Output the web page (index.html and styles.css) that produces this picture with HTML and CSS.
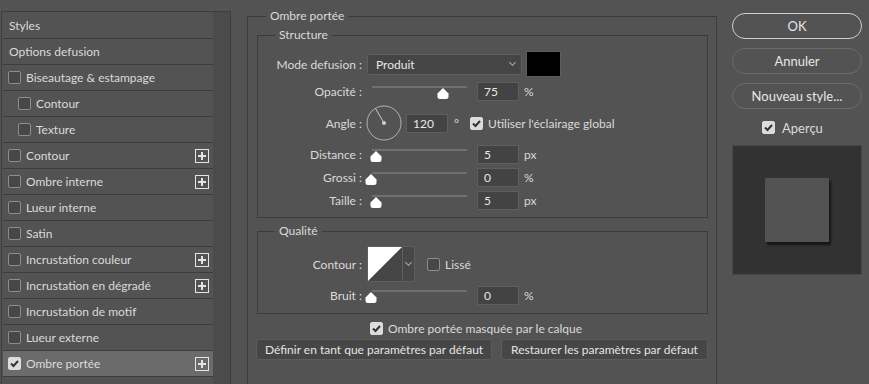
FILE: index.html
```html
<!DOCTYPE html>
<html lang="fr">
<head>
  <meta charset="UTF-8">
  <meta name="viewport" content="width=device-width, initial-scale=1.0">
  <title>Style de calque</title>
  <link rel="stylesheet" href="styles.css">
</head>
<body>
  <div class="dialog">
    <div class="sidebar">
      <ul class="fx-list">
        <li class="fx-row heading">Styles</li>
        <li class="fx-row heading">Options defusion</li>
        <li class="fx-row"><span class="check"></span>Biseautage &amp; estampage</li>
        <li class="fx-row sub"><span class="check"></span>Contour</li>
        <li class="fx-row sub"><span class="check"></span>Texture</li>
        <li class="fx-row"><span class="check"></span>Contour<span class="plus"></span></li>
        <li class="fx-row"><span class="check"></span>Ombre interne<span class="plus"></span></li>
        <li class="fx-row"><span class="check"></span>Lueur interne</li>
        <li class="fx-row"><span class="check"></span>Satin</li>
        <li class="fx-row"><span class="check"></span>Incrustation couleur<span class="plus"></span></li>
        <li class="fx-row"><span class="check"></span>Incrustation en dégradé<span class="plus"></span></li>
        <li class="fx-row"><span class="check"></span>Incrustation de motif</li>
        <li class="fx-row"><span class="check"></span>Lueur externe</li>
        <li class="fx-row active"><span class="check on"></span>Ombre portée<span class="plus"></span></li>
      </ul>
      <div class="scroll"></div>
    </div>

    <div class="main">
      <fieldset class="group outer">
        <legend>Ombre portée</legend>

        <fieldset class="group structure">
          <legend>Structure</legend>

          <div class="row row-mode">
            <label class="lbl">Mode defusion :</label>
            <div class="select">Produit<span class="chevron"></span></div>
            <div class="swatch"></div>
          </div>

          <div class="row">
            <label class="lbl">Opacité :</label>
            <div class="slider"><span class="track"></span><span class="thumb" style="left: 65px"></span></div>
            <div class="num">75</div>
            <span class="unit">%</span>
          </div>

          <div class="row row-angle">
            <label class="lbl">Angle :</label>
            <svg class="dial" width="36" height="36" viewBox="0 0 36 36">
              <circle cx="18" cy="18" r="17" fill="none" stroke="#b2b2b2" stroke-width="1"/>
              <line x1="18" y1="18" x2="9.5" y2="3.5" stroke="#cfcfcf" stroke-width="1"/>
              <circle cx="18" cy="18" r="2" fill="#cfcfcf"/>
            </svg>
            <div class="num angle-num">120</div>
            <span class="unit deg">°</span>
            <span class="check on"></span>
            <span class="opt">Utiliser l'éclairage global</span>
          </div>

          <div class="row">
            <label class="lbl">Distance :</label>
            <div class="slider"><span class="track"></span><span class="thumb" style="left: -2px"></span></div>
            <div class="num">5</div>
            <span class="unit">px</span>
          </div>

          <div class="row">
            <label class="lbl">Grossi :</label>
            <div class="slider"><span class="track"></span><span class="thumb" style="left: -7px"></span></div>
            <div class="num">0</div>
            <span class="unit">%</span>
          </div>

          <div class="row">
            <label class="lbl">Taille :</label>
            <div class="slider"><span class="track"></span><span class="thumb" style="left: -2px"></span></div>
            <div class="num">5</div>
            <span class="unit">px</span>
          </div>
        </fieldset>

        <fieldset class="group quality">
          <legend>Qualité</legend>

          <div class="row row-contour">
            <label class="lbl">Contour :</label>
            <div class="curve">
              <svg width="34" height="34" viewBox="0 0 34 34">
                <rect width="34" height="34" fill="#464646"/>
                <polygon points="0,0 34,0 0,34" fill="#ffffff"/>
              </svg>
              <span class="curve-arrow"><span class="chevron"></span></span>
            </div>
            <span class="check"></span>
            <span class="opt">Lissé</span>
          </div>

          <div class="row">
            <label class="lbl">Bruit :</label>
            <div class="slider"><span class="track"></span><span class="thumb" style="left: -7px"></span></div>
            <div class="num">0</div>
            <span class="unit">%</span>
          </div>
        </fieldset>

        <div class="mask-row">
          <span class="check on"></span>
          <span class="opt">Ombre portée masquée par le calque</span>
        </div>

        <div class="defaults">
          <button class="btn btn-set">Définir en tant que paramètres par défaut</button>
          <button class="btn btn-reset">Restaurer les paramètres par défaut</button>
        </div>
      </fieldset>
    </div>

    <div class="actions">
      <button class="pill primary">OK</button>
      <button class="pill">Annuler</button>
      <button class="pill">Nouveau style...</button>
      <div class="preview-toggle">
        <span class="check on"></span>
        <span class="opt">Aperçu</span>
      </div>
      <div class="preview">
        <div class="preview-square"></div>
      </div>
    </div>
  </div>
</body>
</html>
```

FILE: styles.css
```css
body {
  margin: 0;
  height: 384px;
  overflow: hidden;
  background-color: #535353;
  font-family: Lato, "Noto Sans", sans-serif;
  font-size: 12px;
  color: #dadada;
}

.dialog {
  display: flex;
  align-items: flex-start;
  height: 384px;
  overflow: hidden;
}

/* left list of effects */

.sidebar {
  display: flex;
  flex: none;
  width: 228px;
  height: 380px;
  margin: 11px 0 0 1px;
  border-top: 1px solid #3d3d3d;
  border-left: 1px solid #3d3d3d;
  border-right: 1px solid #3d3d3d;
}

.fx-list {
  list-style: none;
  margin: 1px 0 0 1px;
  padding: 0;
  width: 210px;
}

.fx-row {
  display: flex;
  align-items: center;
  height: 25px;
  border-bottom: 1px solid #3d3d3d;
  padding-left: 5px;
  white-space: nowrap;
}

.fx-row.heading {
  padding-left: 6px;
}

.fx-row.sub {
  padding-left: 15px;
}

.fx-row.active {
  background-color: #6b6b6b;
}

.fx-row .check {
  margin-right: 5px;
}

.scroll {
  flex: 1;
  background-color: #4b4b4b;
}

.check {
  display: inline-block;
  flex: none;
  width: 11px;
  height: 11px;
  border: 1px solid #8d8d8d;
  border-radius: 2px;
  background-color: #474747;
}

.check.on {
  border-color: #dcdcdc;
  background-color: #dcdcdc;
  background-image: url("data:image/svg+xml,%3Csvg xmlns='http://www.w3.org/2000/svg' width='11' height='11' viewBox='0 0 11 11'%3E%3Cpath d='M2 5.5 L4.5 8 L9 3' fill='none' stroke='%23333' stroke-width='2'/%3E%3C/svg%3E");
}

.plus {
  margin-left: auto;
  margin-right: 4px;
  width: 12px;
  height: 12px;
  border: 1px solid #e4e4e4;
  background-image: url("data:image/svg+xml,%3Csvg xmlns='http://www.w3.org/2000/svg' width='12' height='12' viewBox='0 0 12 12'%3E%3Cpath d='M6 2 V10 M2 6 H10' stroke='%23e4e4e4' stroke-width='2'/%3E%3C/svg%3E");
}

/* main settings */

.main {
  flex: none;
  margin-left: 16px;
}

.group {
  margin: 0;
  padding: 0;
  border: 1px solid #3c3c3c;
  min-width: 0;
}

.group legend {
  margin-left: 17px;
  padding: 0 4px;
  line-height: 14px;
}

.outer {
  box-sizing: border-box;
  width: 470px;
  height: 400px;
  margin-top: 9px;
  padding: 0 8px 0 9px;
}

.outer > legend {
  margin-left: 9px;
}

.structure {
  margin-top: 5px;
  padding: 9px 0 7px;
  display: flex;
  flex-direction: column;
  gap: 4px;
}

.quality {
  margin-top: 6px;
  padding: 8px 0 8px;
  display: flex;
  flex-direction: column;
  gap: 4px;
}

.row {
  display: flex;
  align-items: center;
  height: 19px;
}

.row-mode {
  height: 26px;
  margin-bottom: 1px;
}

.row-angle {
  height: 36px;
}

.row-contour {
  height: 36px;
}

.lbl {
  width: 104px;
  flex: none;
  text-align: right;
  white-space: nowrap;
}

.select {
  display: flex;
  align-items: center;
  width: 145px;
  height: 19px;
  margin-left: 5px;
  padding-left: 8px;
  border: 1px solid #5e5e5e;
  border-radius: 3px;
  background-color: #454545;
  color: #e8e8e8;
}

.chevron {
  display: inline-block;
  width: 4px;
  height: 4px;
  border-right: 1px solid #a8a8a8;
  border-bottom: 1px solid #a8a8a8;
  transform: rotate(45deg);
}

.select .chevron {
  margin-left: auto;
  margin-right: 6px;
  margin-top: -3px;
}

.swatch {
  width: 33px;
  height: 24px;
  margin-left: 4px;
  border: 1px solid #5e5e5e;
  background-color: #000;
}

.slider {
  position: relative;
  width: 95px;
  height: 19px;
  margin-left: 10px;
}

.track {
  position: absolute;
  left: 0;
  right: 0;
  top: 4px;
  height: 2px;
  background-color: #707070;
}

.thumb {
  position: absolute;
  top: 6px;
  width: 12px;
  height: 11px;
  background-image: url("data:image/svg+xml,%3Csvg xmlns='http://www.w3.org/2000/svg' width='12' height='11' viewBox='0 0 12 11'%3E%3Cpath d='M6 0 L11.5 5.5 V8.5 Q11.5 11 9 11 H3 Q0.5 11 0.5 8.5 V5.5 Z' fill='%23ffffff'/%3E%3C/svg%3E");
}

.num {
  width: 34px;
  height: 17px;
  margin-left: 10px;
  padding-left: 6px;
  line-height: 17px;
  border: 1px solid #5e5e5e;
  background-color: #434343;
  color: #e8e8e8;
}

.unit {
  margin-left: 5px;
}

.dial {
  flex: none;
  margin-left: 4px;
}

.angle-num {
  margin-left: 4px;
  width: 34px;
}

.unit.deg {
  margin-left: 6px;
  margin-right: 11px;
}

.opt {
  margin-left: 5px;
  white-space: nowrap;
}

.curve {
  display: flex;
  margin-left: 5px;
  border: 1px solid #5e5e5e;
}

.curve svg {
  display: block;
}

.curve-arrow {
  display: flex;
  align-items: center;
  justify-content: center;
  width: 11px;
  border-left: 1px solid #5e5e5e;
  background-color: #474747;
}

.curve-arrow .chevron {
  margin-top: -3px;
}

.row-contour .check {
  margin-left: 12px;
}

.mask-row {
  display: flex;
  align-items: center;
  height: 14px;
  margin-top: 7px;
  margin-left: 113px;
}

.defaults {
  display: flex;
  gap: 9px;
  margin-top: 4px;
  margin-left: -1px;
}

.btn {
  height: 21px;
  padding: 0;
  border: 1px solid #5c5c5c;
  border-radius: 3px;
  background-color: #464646;
  color: #e4e4e4;
  font-family: inherit;
  font-size: 12px;
}

.btn-set {
  width: 236px;
}

.btn-reset {
  width: 207px;
}

/* right column */

.actions {
  display: flex;
  flex: none;
  flex-direction: column;
  width: 130px;
  margin-top: 13px;
  margin-left: 15px;
}

.pill {
  height: 26px;
  margin-bottom: 9px;
  border: 1px solid #6b6b6b;
  border-radius: 13px;
  background-color: #535353;
  color: #e6e6e6;
  font-family: inherit;
  font-size: 13px;
}

.pill.primary {
  border-color: #cfcfcf;
}

.preview-toggle {
  display: flex;
  align-items: center;
  height: 13px;
  margin-top: 3px;
  padding-left: 30px;
}

.preview-toggle .opt {
  margin-left: 7px;
  font-size: 13px;
}

.preview {
  display: flex;
  align-items: center;
  justify-content: center;
  width: 128px;
  height: 128px;
  margin-top: 11px;
  border: 1px solid #474747;
  background-color: #323232;
}

.preview-square {
  width: 64px;
  height: 64px;
  background-color: #535353;
  box-shadow: 2px 3px 2px rgba(0, 0, 0, 0.6);
}
```
